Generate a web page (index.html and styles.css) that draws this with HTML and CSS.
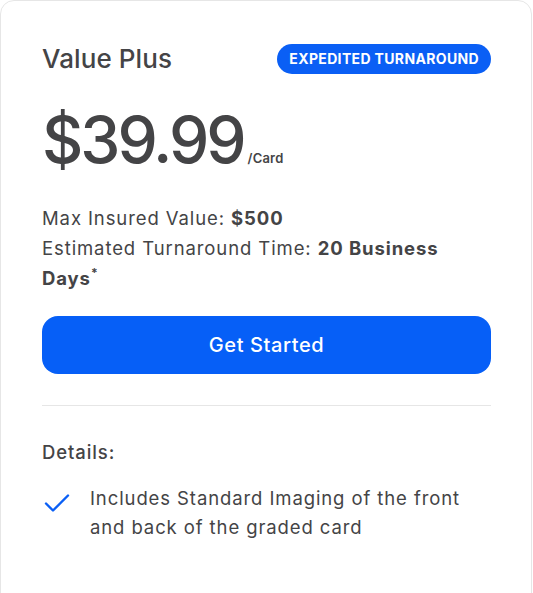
FILE: index.html
```html
<!DOCTYPE html>
<html>
<head>
<meta charset="utf-8">
<link rel="stylesheet" href="styles.css">
</head>
<body>
<div class="card">
  <div class="head">
    <h2 class="title">Value Plus</h2>
    <span class="badge">EXPEDITED TURNAROUND</span>
  </div>
  <div class="price"><span class="amount">$39.99</span><span class="unit">/Card</span></div>
  <div class="facts">
    <p>Max Insured Value: <b>$500</b></p>
    <p>Estimated Turnaround Time: <b>20 Business</b> <b>Days</b><span class="star">*</span></p>
  </div>
  <button class="cta">Get Started</button>
  <hr class="divider">
  <div class="details-label">Details:</div>
  <ul class="features">
    <li>
      <svg class="check" viewBox="0 0 26 20" width="26" height="20"><path d="M2 10.5 L9 17.5 L24 2.5" fill="none" stroke="#0a5ff5" stroke-width="2.4" stroke-linecap="round" stroke-linejoin="round"/></svg>
      <span>Includes Standard Imaging of the front and back of the graded card</span>
    </li>
  </ul>
</div>
</body>
</html>
```
FILE: styles.css
```css
* { box-sizing: border-box; }
html, body { margin: 0; padding: 0; background: #fff; }
body {
  font-family: Inter, "Noto Sans", sans-serif;
  color: #444446;
}
.card {
  width: 532px;
  min-height: 640px;
  border: 1px solid #e6e6e6;
  border-radius: 14px;
  padding: 42px 40px 0 41px;
}
.head {
  display: flex;
  justify-content: space-between;
  align-items: center;
}
.title {
  margin: 0;
  font-size: 26px;
  font-weight: 500;
  color: #444446;
  letter-spacing: 0.1px;
}
.badge {
  background: #0a5ff5;
  color: #fff;
  font-size: 14px;
  font-weight: 700;
  letter-spacing: 0.35px;
  height: 30px;
  line-height: 30px;
  padding: 0 12px;
  border-radius: 15px;
}
.price {
  margin-top: 28px;
  display: flex;
  align-items: baseline;
}
.amount {
  font-size: 64px;
  font-weight: 500;
  letter-spacing: -3px;
  line-height: 76px;
}
.unit {
  font-size: 13px;
  font-weight: 600;
  margin-left: 4px;
  letter-spacing: 0.2px;
}
.facts {
  margin-top: 25px;
  font-size: 18.5px;
  letter-spacing: 0.9px;
  line-height: 30px;
}
.facts p { margin: 0; }
.facts b { font-weight: 700; }
.star {
  font-size: 12px;
  font-weight: 700;
  line-height: 20px;
  vertical-align: top;
  letter-spacing: 0;
}
.cta {
  display: block;
  width: 100%;
  height: 58px;
  margin-top: 23px;
  background: #065ff7;
  color: #fff;
  border: 0;
  border-radius: 16px;
  font-family: inherit;
  font-size: 20px;
  font-weight: 500;
  letter-spacing: 0.6px;
}
.divider {
  border: 0;
  border-top: 1px solid #e6e6e6;
  margin: 31px 0 0;
}
.details-label {
  margin-top: 35px;
  font-size: 18.5px;
  letter-spacing: 0.9px;
  font-weight: 500;
}
.features {
  list-style: none;
  margin: 21px 0 0;
  padding: 0;
}
.features li {
  display: flex;
  gap: 20px;
  font-size: 18.5px;
  letter-spacing: 0.9px;
  line-height: 29px;
}
.check { flex: none; margin-top: 9px; margin-left: 2px; }
```
